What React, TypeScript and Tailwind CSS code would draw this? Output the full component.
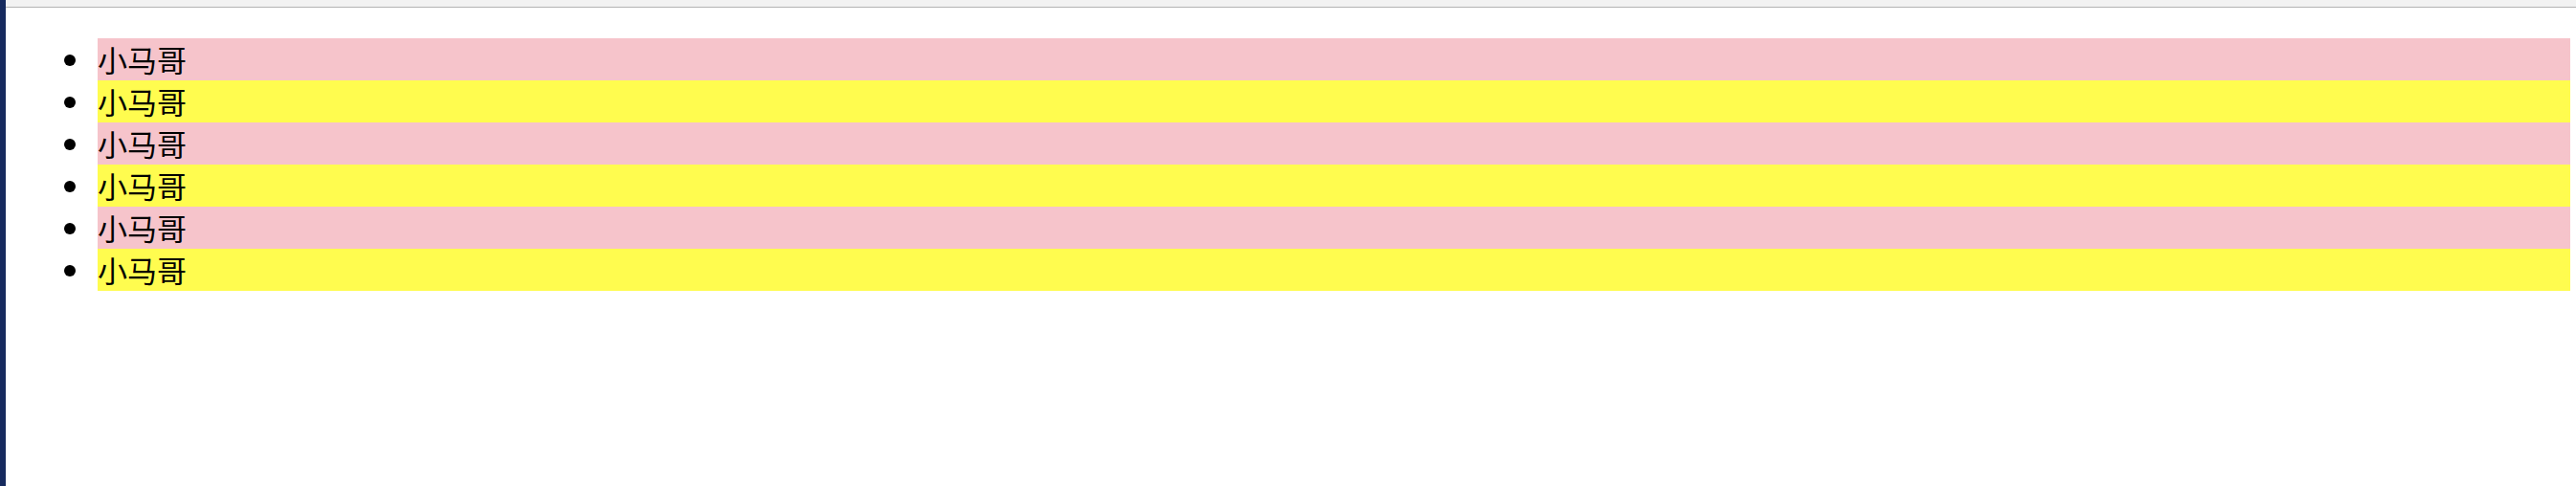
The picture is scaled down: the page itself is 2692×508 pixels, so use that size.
import React from "react";

export default function App() {
  const rows = [0, 1, 2, 3, 4, 5];
  return (
    <div className="flex w-[2692px] h-[508px] bg-white overflow-hidden">
      <div className="w-[6px] h-full bg-[#162a5e] shrink-0" />
      <div className="flex-1 flex flex-col">
        <div className="h-[8px] bg-[#f2f2f2] border-b border-[#b3b3b3]" />
        <ul
          className="list-none mt-[32px] pl-[96px] pr-[6px] text-[31px] leading-[44px] text-black"
          style={{ fontFamily: '"Noto Sans CJK SC", "Noto Sans", sans-serif' }}
        >
          {rows.map((i) => (
            <li
              key={i}
              className={
                i % 2 === 0
                  ? "relative h-[44px] bg-[#f6c4cb] before:content-[''] before:absolute before:left-[-35px] before:top-[17px] before:w-[12px] before:h-[12px] before:rounded-full before:bg-black"
                  : "relative h-[44px] bg-[#fffc4f] before:content-[''] before:absolute before:left-[-35px] before:top-[17px] before:w-[12px] before:h-[12px] before:rounded-full before:bg-black"
              }
            >
              小马哥
            </li>
          ))}
        </ul>
      </div>
    </div>
  );
}
